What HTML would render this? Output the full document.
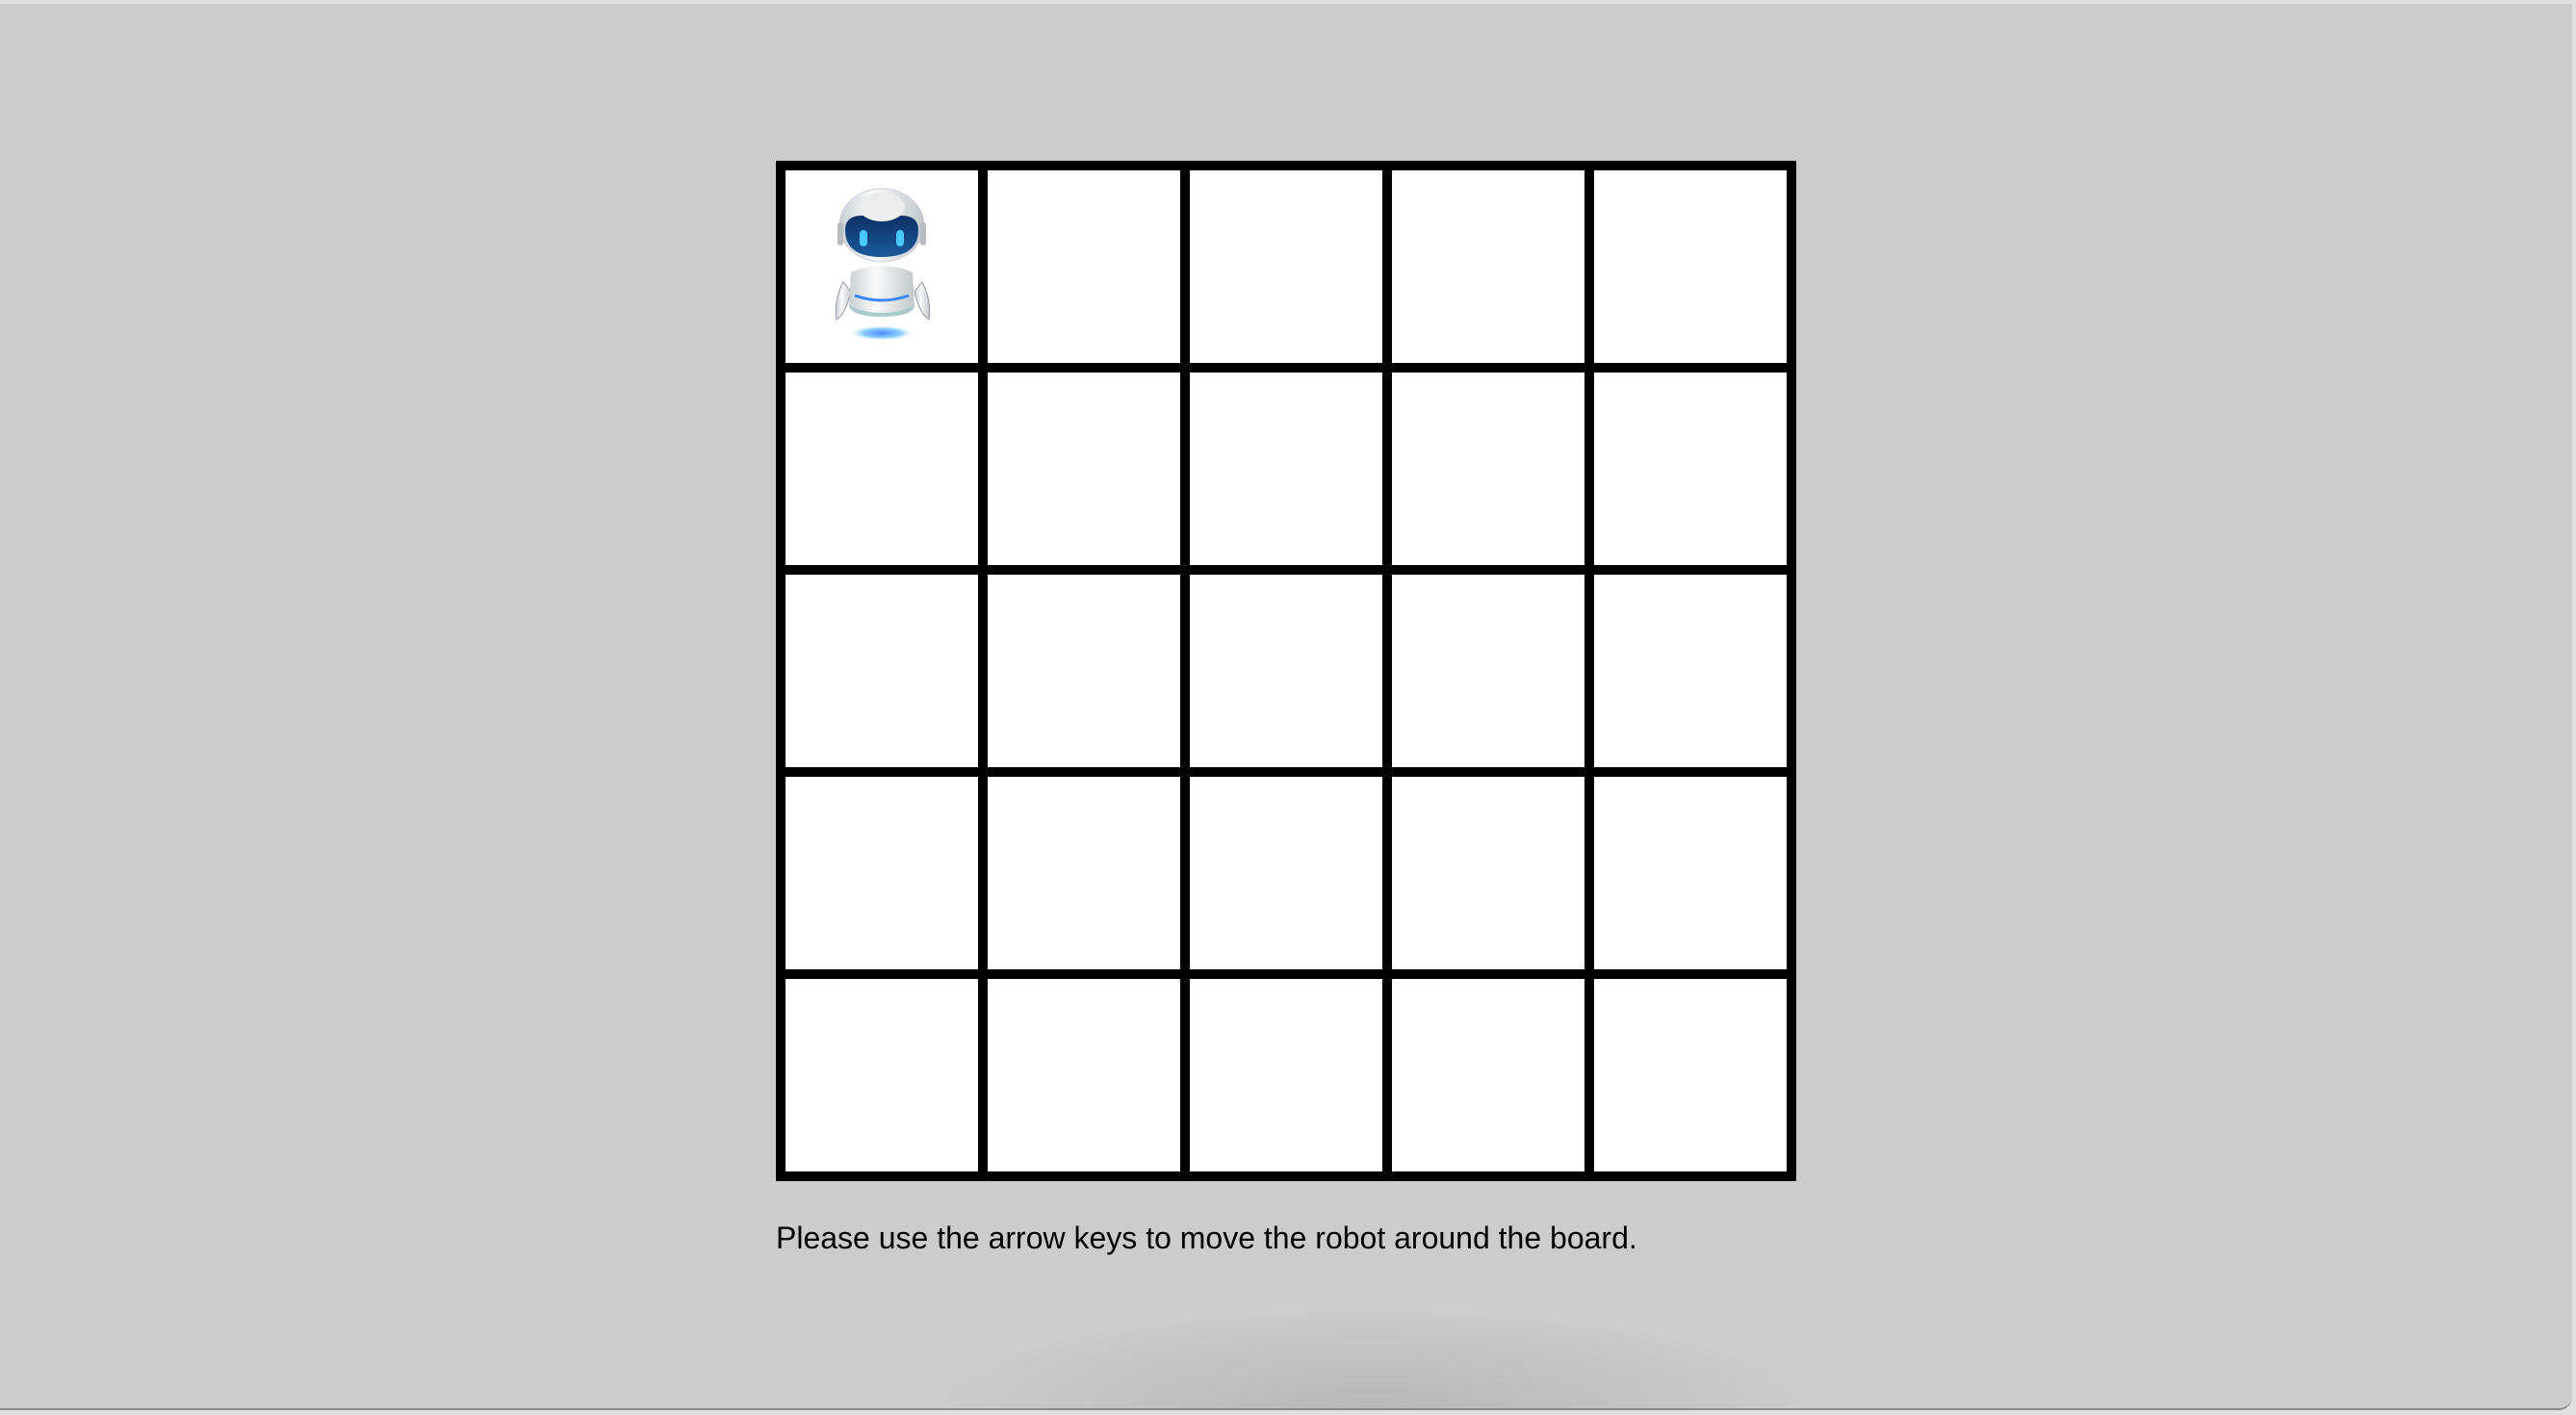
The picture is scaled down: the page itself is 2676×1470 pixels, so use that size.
<!DOCTYPE html>
<html><head><meta charset="utf-8"><style>
html,body{margin:0;padding:0;width:2676px;height:1470px;overflow:hidden;background:#e0e0e0;}
#win{position:absolute;left:0;top:4px;width:2672px;height:1459px;background:#cccccc;border-bottom-right-radius:14px;border-bottom:2px solid #888;overflow:hidden;}
#shadow{position:absolute;left:850px;top:1330px;width:1150px;height:129px;background:radial-gradient(ellipse 50% 100% at 50% 100%,rgba(0,0,0,0.10),rgba(0,0,0,0) 80%);}
#grid{position:absolute;left:806px;top:167px;width:1060px;height:1060px;background:#000;display:grid;grid-template-columns:repeat(5,200px);grid-template-rows:repeat(5,200px);gap:10px;padding:10px;box-sizing:border-box;}
#grid div{background:#fff;position:relative;}
#txt{position:absolute;left:806px;top:1268px;font-family:"Liberation Sans",Arial,sans-serif;font-size:32px;line-height:37px;color:#000;white-space:nowrap;}
</style></head><body>
<div id="win"><div id="shadow"></div></div>
<div id="grid">
<div><svg width="200" height="200" viewBox="0 0 200 200" style="position:absolute;left:0;top:0">
<defs>
<radialGradient id="sh" cx="50%" cy="50%" r="50%"><stop offset="0" stop-color="#4a8cff"/><stop offset="0.6" stop-color="#8fd0ff"/><stop offset="1" stop-color="#fff" stop-opacity="0"/></radialGradient>
<linearGradient id="wh" x1="0" x2="1"><stop offset="0" stop-color="#c8d0d4"/><stop offset="0.4" stop-color="#fafafa"/><stop offset="1" stop-color="#c0c8cc"/></linearGradient>
<linearGradient id="vs" x1="0" y1="0" x2="0" y2="1"><stop offset="0" stop-color="#0d2f66"/><stop offset="1" stop-color="#1a5a9a"/></linearGradient>
</defs>
<ellipse cx="100" cy="169" rx="34" ry="8" fill="url(#sh)"/>
<path d="M60 116 Q50 135 53 155 Q62 150 68 126 Z" fill="url(#wh)" stroke="#99a" stroke-width="1"/>
<path d="M142 116 Q152 135 149 155 Q140 150 134 126 Z" fill="url(#wh)" stroke="#99a" stroke-width="1"/>
<path d="M68 106 Q100 92 132 106 L134 142 Q130 152 100 152 Q70 152 66 142 Z" fill="url(#wh)"/>
<path d="M66 140 Q70 152 100 152 Q130 152 134 140 Q120 148 100 148 Q80 148 66 140Z" fill="#a8cccc"/>
<path d="M72 130 Q100 140 128 130" stroke="#3a86ff" stroke-width="3" fill="none"/>
<ellipse cx="100" cy="57" rx="44" ry="38" fill="url(#wh)" stroke="#ccd" stroke-width="1"/>
<path d="M62 62 Q62 46 82 47 Q100 50 118 47 Q138 46 138 62 Q138 90 100 90 Q62 90 62 62Z" fill="url(#vs)"/>
<ellipse cx="100" cy="38" rx="24" ry="15" fill="#ececec"/>
<rect x="77" y="62" width="8" height="17" rx="4" fill="#46c8ff"/>
<rect x="115" y="62" width="8" height="17" rx="4" fill="#46c8ff"/>
<rect x="54" y="54" width="6" height="24" rx="3" fill="#b8bcc0"/>
<rect x="140" y="54" width="6" height="24" rx="3" fill="#b8bcc0"/>
</svg></div>
<div></div><div></div><div></div><div></div>
<div></div><div></div><div></div><div></div><div></div>
<div></div><div></div><div></div><div></div><div></div>
<div></div><div></div><div></div><div></div><div></div>
<div></div><div></div><div></div><div></div><div></div>
</div>
<div id="txt">Please use the arrow keys to move the robot around the board.</div>
</body></html>
